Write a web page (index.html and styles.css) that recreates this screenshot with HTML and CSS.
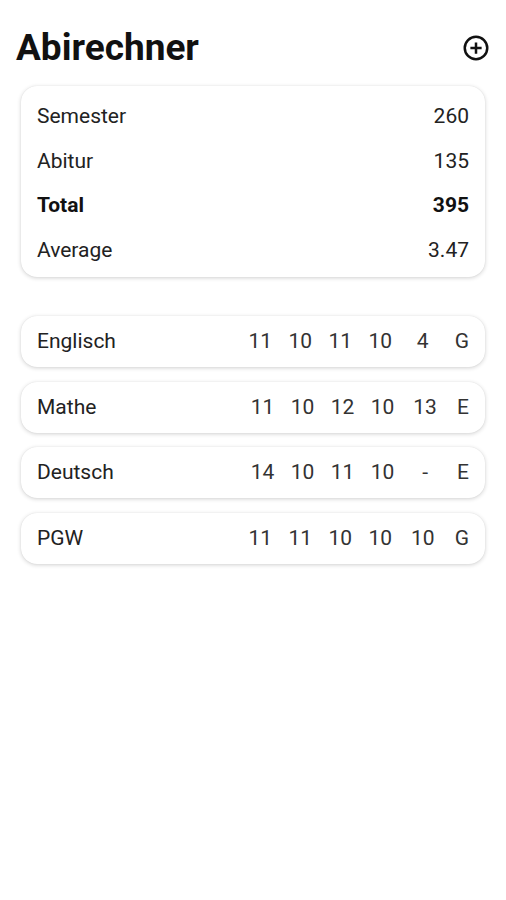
FILE: index.html
```html
<!DOCTYPE html>
<html lang="de">
<head>
  <meta charset="UTF-8">
  <title>Abirechner</title>
  <link rel="stylesheet" href="styles.css">
</head>
<body>

  <header class="top-bar">
    <h1>Abirechner</h1>
    <button class="add-button" type="button" aria-label="Fach hinzufügen">
      <svg viewBox="0 0 24 24" width="30" height="30" fill="none" stroke="#111" stroke-width="2">
        <circle cx="12" cy="12" r="9"/>
        <path d="M12 7.5v9M7.5 12h9"/>
      </svg>
    </button>
  </header>

  <main class="content">
    <section class="card summary">
      <div class="summary-row"><span>Semester</span><span>260</span></div>
      <div class="summary-row"><span>Abitur</span><span>135</span></div>
      <div class="summary-row total"><span>Total</span><span>395</span></div>
      <div class="summary-row"><span>Average</span><span>3.47</span></div>
    </section>

    <section class="subjects">
      <div class="card subject">
        <span class="subject-name">Englisch</span>
        <span class="grade">11</span>
        <span class="grade">10</span>
        <span class="grade">11</span>
        <span class="grade">10</span>
        <span class="grade exam">4</span>
        <span class="level">G</span>
      </div>
      <div class="card subject">
        <span class="subject-name">Mathe</span>
        <span class="grade">11</span>
        <span class="grade">10</span>
        <span class="grade">12</span>
        <span class="grade">10</span>
        <span class="grade exam">13</span>
        <span class="level">E</span>
      </div>
      <div class="card subject">
        <span class="subject-name">Deutsch</span>
        <span class="grade">14</span>
        <span class="grade">10</span>
        <span class="grade">11</span>
        <span class="grade">10</span>
        <span class="grade exam">-</span>
        <span class="level">E</span>
      </div>
      <div class="card subject">
        <span class="subject-name">PGW</span>
        <span class="grade">11</span>
        <span class="grade">11</span>
        <span class="grade">10</span>
        <span class="grade">10</span>
        <span class="grade exam">10</span>
        <span class="level">G</span>
      </div>
    </section>
  </main>

</body>
</html>
```

FILE: styles.css
```css
body {
  margin: 0;
  background-color: #fff;
  font-family: Roboto, "Noto Sans", sans-serif;
  color: #222;
}
.top-bar {
  display: flex;
  justify-content: space-between;
  align-items: center;
  height: 48px;
  padding: 24px 15px 0 16px;
}
.top-bar h1 {
  margin: 0;
  font-size: 37px;
  line-height: 48px;
  font-weight: 700;
  color: #111;
}
.add-button {
  display: flex;
  padding: 0;
  border: none;
  background: none;
  cursor: pointer;
}
.content {
  padding: 14px 21px 40px 21px;
}
.card {
  background-color: white;
  border-radius: 16px;
  box-shadow: 0 1px 4px rgba(0,0,0,0.18), 0 0 1px rgba(0,0,0,0.1);
}
.summary {
  padding: 8px 16px 5px 16px;
  margin-bottom: 39px;
}
.summary-row {
  display: flex;
  justify-content: space-between;
  font-size: 21px;
  line-height: 44.5px;
}
.summary-row.total {
  font-weight: 700;
  color: #111;
}
.subjects {
  display: flex;
  flex-direction: column;
  gap: 14.5px;
}
.subject {
  display: flex;
  align-items: center;
  padding: 13px 16px;
  font-size: 21px;
  line-height: 25px;
}
.subject-name {
  flex: 1;
}
.grade {
  width: 40px;
  text-align: center;
  color: #333;
}
.grade.exam {
  margin-left: 2.5px;
}
.level {
  margin-left: 12px;
  color: #333;
}
```
